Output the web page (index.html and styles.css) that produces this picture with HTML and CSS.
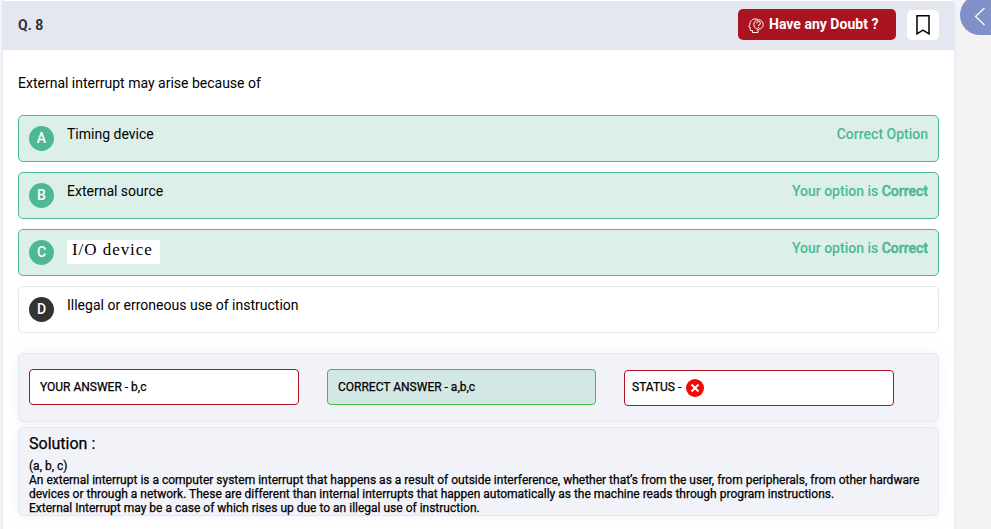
FILE: index.html
```html
<!DOCTYPE html>
<html lang="en">
<head>
<meta charset="utf-8">
<title>Question 8</title>
<link rel="stylesheet" href="styles.css">
</head>
<body>
<main class="panel">
  <header class="head">
    <h1 class="qno">Q. 8</h1>
    <button class="doubt">
      <svg width="16" height="16" viewBox="0 0 16 16" fill="none" stroke="#fff" stroke-width="1"><path d="M4.500 14.500v-2H3q-.8 0-.8-.8V9.500L.8 8.800Q1.600 7.800 1.800 6.200A5.500 5.500 0 0 1 10 1.600"/><path d="M4.500 14.500h5.500v-3.300"/><circle cx="10.500" cy="6.500" r="4.700"/><path d="M8.800 5.300A1.800 1.800 0 1 1 10.600 7v1.200m0 .8v1"/></svg>
      <span>Have any Doubt ?</span>
    </button>
    <button class="mark" aria-label="Bookmark">
      <svg width="14" height="20" viewBox="0 0 14 20" fill="none" stroke="#000" stroke-width="1.500"><path d="M1 .800h12v18L7 15.200 1 18.800z"/></svg>
    </button>
  </header>
  <section class="body">
    <p class="question">External interrupt may arise because of</p>
    <div class="options">
      <div class="option right"><b class="letter">A</b><span class="text">Timing device</span><span class="note">Correct Option</span></div>
      <div class="option right"><b class="letter">B</b><span class="text">External source</span><span class="note">Your option is <b>Correct</b></span></div>
      <div class="option right"><b class="letter">C</b><span class="serif">I/O device</span><span class="note">Your option is <b>Correct</b></span></div>
      <div class="option"><b class="letter">D</b><span class="text">Illegal or erroneous use of instruction</span></div>
    </div>
    <div class="answers">
      <div class="answer">YOUR ANSWER - b,c</div>
      <div class="answer good">CORRECT ANSWER - a,b,c</div>
      <div class="answer status"><span>STATUS -</span><svg width="18" height="18" viewBox="0 0 18 18"><circle cx="9" cy="9" r="9" fill="#f90606"/><path d="M5.500 5.500l7 7m0-7l-7 7" stroke="#fff" stroke-width="2"/></svg></div>
    </div>
    <div class="solution">
      <h2>Solution :</h2>
      <p>(a, b, c)<br>An external interrupt is a computer system interrupt that happens as a result of outside interference, whether that’s from the user, from peripherals, from other hardware<br>devices or through a network. These are different than internal interrupts that happen automatically as the machine reads through program instructions.<br>External Interrupt may be a case of which rises up due to an illegal use of instruction.</p>
    </div>
  </section>
</main>
<aside class="rail">
  <button class="toggle" aria-label="Open panel"><svg width="12" height="20" viewBox="0 0 12 20" fill="none" stroke="#fff" stroke-width="1.300"><path d="M10.500 1L1.500 9.500l9 8.500"/></svg></button>
</aside>
</body>
</html>
```
FILE: styles.css
```css
* { box-sizing: border-box; }
body { margin: 0; display: flex; height: 529px; overflow: hidden; background: #f3f3f3; color: #000; font-family: Roboto, sans-serif; }
button { border: 0; padding: 0; font: inherit; }
h1, h2, p { margin: 0; }
.panel { width: 953px; margin-left: 2px; flex: none; background: #fff; border: solid #e6e7f4; border-width: 0 1px; padding-top: 1px; }
.head { height: 49px; background: #e4e7f0; display: flex; align-items: center; padding: 0 15px 2px; }
.qno { flex: 1; padding-top: 1px; font-size: 14px; line-height: 20px; font-weight: 700; color: #333; }
.doubt { width: 158px; height: 31px; margin-right: 11px; border-radius: 5px; background: #aa1421; color: #fff; display: flex; align-items: center; padding-left: 10px; gap: 5px; font-size: 14px; font-weight: 700; }
.doubt svg { margin-top: 2px; }
.doubt span { margin-top: -1px; letter-spacing: .02px; }
.mark { width: 32px; height: 30px; border-radius: 5px; background: #fff; display: flex; align-items: center; justify-content: center; }
.body { padding: 23px 15px 0; }
.question { font-size: 14px; line-height: 20px; }
.options { margin-top: 22px; display: grid; gap: 10px; }
.option { height: 47px; border: 1px solid #e8e8e8; border-radius: 5px; display: flex; align-items: flex-start; padding: 10px; font-size: 14px; }
.right { background: #dcf0e9; border-color: #4db992; }
.letter { width: 25px; height: 25px; border-radius: 50%; background: #333; color: #fff; text-align: center; line-height: 25px; font-weight: 500; margin-right: 13px; }
.right .letter { background: #4db992; }
.text, .note { line-height: 16px; }
.note { margin-left: auto; color: #4db992; font-weight: 500; }
.note b { font-weight: 500; -webkit-text-stroke: .5px #4db992; }
.serif { width: 93px; height: 24px; background: #fff; padding-left: 5px; font: 17px/20px "Liberation Serif", serif; letter-spacing: .95px; }
.answers { margin-top: 20px; height: 69px; padding: 15px 10px; display: flex; gap: 28px; }
.answers, .solution { background: #f2f3f9; border: 1px solid #e6e7f4; border-radius: 5px; box-shadow: 0 0 12px #e6e7f480; }
.answer { width: 270px; height: 36px; border: 1px solid #aa1421; border-radius: 4px; background: #fff; padding-left: 10px; line-height: 34px; font-size: 12px; -webkit-text-stroke: .25px #000; }
.good { width: 269px; background: #d3e8e4; border-color: #40bf40; }
.status { margin-top: 1px; padding-left: 7px; display: flex; gap: 5px; }
.status span { margin-top: -1px; }
.status svg { margin-top: 8px; }
.solution { margin-top: 5px; height: 89px; padding: 6px 10px 0; -webkit-text-stroke: .25px #000; }
.solution h2 { font-size: 16px; line-height: 20px; font-weight: 400; }
.solution p { margin-top: 5px; font-size: 12px; line-height: 14px; white-space: nowrap; }
.rail { flex: 1; display: flex; justify-content: flex-end; align-items: flex-start; overflow: hidden; }
.toggle { width: 31px; height: 40px; margin-top: -5px; background: #8190c8; border-radius: 20px 0 0 20px; display: flex; align-items: center; padding: 3px 0 0 14px; }
```
